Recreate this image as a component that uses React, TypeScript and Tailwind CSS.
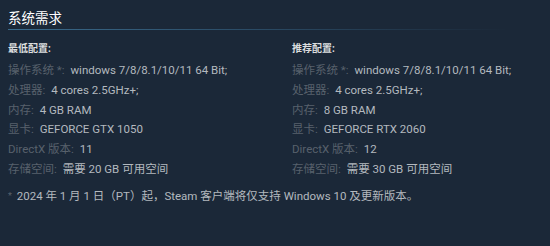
const minimum: [string, string][] = [
  ["操作系统 *:", "windows 7/8/8.1/10/11 64 Bit;"],
  ["处理器:", "4 cores 2.5GHz+;"],
  ["内存:", "4 GB RAM"],
  ["显卡:", "GEFORCE GTX 1050"],
  ["DirectX 版本:", "11"],
  ["存储空间:", "需要 20 GB 可用空间"],
];

const recommended: [string, string][] = [
  ["操作系统 *:", "windows 7/8/8.1/10/11 64 Bit;"],
  ["处理器:", "4 cores 2.5GHz+;"],
  ["内存:", "8 GB RAM"],
  ["显卡:", "GEFORCE RTX 2060"],
  ["DirectX 版本:", "12"],
  ["存储空间:", "需要 30 GB 可用空间"],
];

function ReqColumn({ title, rows }: { title: string; rows: [string, string][] }) {
  return (
    <div className="w-[284px] shrink-0">
      <p className="text-[10px] font-bold leading-[14px] text-[#dcdedf]">{title}</p>
      <ul className="mt-[5px]">
        {rows.map(([label, value]) => (
          <li key={label} className="h-[19.8px] leading-[19.8px] whitespace-nowrap">
            <span className="text-[#58616c]">{label}</span>{" "}
            <span className="ml-[3px] text-[#b3b9bf]">{value}</span>
          </li>
        ))}
      </ul>
    </div>
  );
}

export default function App() {
  return (
    <div
      className="h-[246px] w-[550px] overflow-hidden bg-[#1b2838] px-[8px] pt-[9px] text-[11.5px]"
      style={{ fontFamily: "Roboto, 'Noto Sans CJK SC', sans-serif" }}
    >
      <h2 className="text-[13.5px] leading-[18px] text-white">系统需求</h2>
      <div className="mt-[2px] h-px w-[500px] bg-gradient-to-r from-[#3a6b8c] via-[#2a4a64] to-transparent" />
      <div className="mt-[12px] flex">
        <ReqColumn title="最低配置:" rows={minimum} />
        <ReqColumn title="推荐配置:" rows={recommended} />
      </div>
      <p className="mt-[7px] whitespace-nowrap leading-[18px] text-[#b3b9bf]">
        <span className="align-top text-[9px] text-[#58616c]">*</span>{" "}
        <span className="ml-[2px]">2024 年 1 月 1 日（PT）起，Steam 客户端将仅支持 Windows 10 及更新版本。</span>
      </p>
    </div>
  );
}
